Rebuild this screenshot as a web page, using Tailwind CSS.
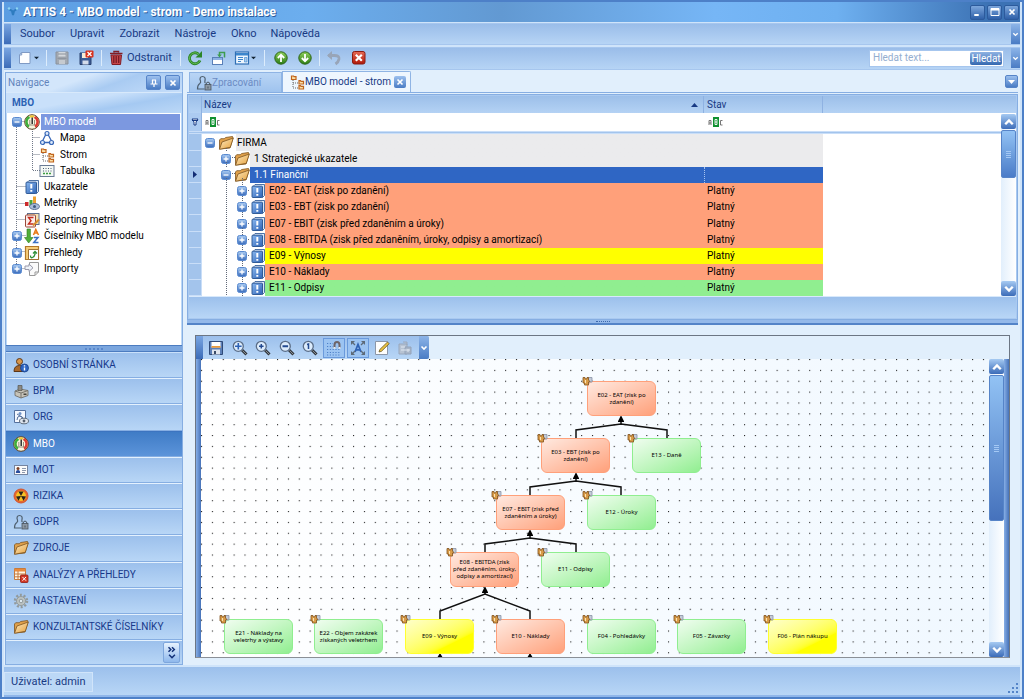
<!DOCTYPE html>
<html lang="cs">
<head>
<meta charset="utf-8">
<title>ATTIS 4 - MBO model - strom - Demo instalace</title>
<script src="https://cdn.jsdelivr.net/npm/@tailwindcss/browser@4"></script>
</head>
<body class="flex h-screen flex-col overflow-hidden border-2 border-[#4d80c8] bg-[#cfe4fa] px-[2px] font-[Roboto,sans-serif] text-[10px] leading-4 text-black">

<svg width="0" height="0" class="absolute" aria-hidden="true">
  <defs>
    <linearGradient id="gBlue" x1="0" y1="0" x2="0" y2="1"><stop offset="0" stop-color="#a9cbf2"/><stop offset="1" stop-color="#3a6cbc"/></linearGradient>
    <linearGradient id="gBook" x1="0" y1="0" x2="1" y2="1"><stop offset="0" stop-color="#8ab8f0"/><stop offset="1" stop-color="#2e62b4"/></linearGradient>
    <linearGradient id="gFold" x1="0" y1="0" x2="1" y2="1"><stop offset="0" stop-color="#fdebc4"/><stop offset="1" stop-color="#e6a03a"/></linearGradient>
    <linearGradient id="gGreen" x1="0" y1="0" x2="0" y2="1"><stop offset="0" stop-color="#8fd05c"/><stop offset="1" stop-color="#2b7d14"/></linearGradient>
    <linearGradient id="gRed" x1="0" y1="0" x2="0" y2="1"><stop offset="0" stop-color="#e66a55"/><stop offset="1" stop-color="#b01808"/></linearGradient>
    <symbol id="plus" viewBox="0 0 10 10"><rect x=".5" y=".5" width="9" height="9" rx="2" fill="url(#gBlue)" stroke="#5a8ad0"/><path d="M5 2.500v5M2.500 5h5" stroke="#fff" stroke-width="1.300"/></symbol>
    <symbol id="minus" viewBox="0 0 10 10"><rect x=".5" y=".5" width="9" height="9" rx="2" fill="url(#gBlue)" stroke="#5a8ad0"/><path d="M2.500 5h5" stroke="#fff" stroke-width="1.300"/></symbol>
    <symbol id="folder" viewBox="0 0 16 16"><path d="M1.500 14V5l1.200-1.300h3.500l1.500-1.200 6.800-1 .5 1.500L12 13z" fill="#e0a04a" stroke="#7d5420" stroke-width=".8"/><path d="M1.500 14.300 4 7 15.300 3 12.300 12.300z" fill="url(#gFold)" stroke="#7d5420" stroke-width=".8"/></symbol>
    <symbol id="book" viewBox="0 0 16 16"><path d="M3 3.500 5 1.500h9.500v11l-2 2z" fill="#dbe8f8" stroke="#24508f" stroke-width=".8"/><rect x="2" y="3.200" width="10.500" height="11.300" rx=".8" fill="url(#gBook)" stroke="#24508f" stroke-width=".9"/><path d="M7.300 5v4.500M7.300 11v1.700" stroke="#fff" stroke-width="2"/></symbol>
    <symbol id="gauge" viewBox="0 0 16 16"><circle cx="8" cy="8" r="7.300" fill="#f8f5de" stroke="#5f4426" stroke-width="1"/><path d="M5.500 3A5.500 5.500 0 0 0 5 12.600" fill="none" stroke="#3fae3c" stroke-width="2.500"/><path d="M10.500 3A5.500 5.500 0 0 1 11 12.600" fill="none" stroke="#dd3c32" stroke-width="2.500"/><path d="M6 2.700a6 6 0 0 1 4 0" fill="none" stroke="#f5c832" stroke-width="2"/><path d="M7.500 3.500h1.400V10H7.500z" fill="#222"/><path d="M5.800 6v5h4.700V6" fill="none" stroke="#8b8674" stroke-width=".9"/></symbol>
    <symbol id="mapa" viewBox="0 0 16 16"><path d="M7 4 3.500 11M8.800 4l3.700 7M5 12.500h6" stroke="#3a69b8" stroke-width="1.300"/><circle cx="8" cy="3.500" r="2" fill="#dce9fb" stroke="#3a69b8" stroke-width="1.200"/><circle cx="3.500" cy="12.500" r="2" fill="#dce9fb" stroke="#3a69b8" stroke-width="1.200"/><circle cx="12.500" cy="12.500" r="2" fill="#dce9fb" stroke="#3a69b8" stroke-width="1.200"/></symbol>
    <symbol id="strom" viewBox="0 0 16 16"><path d="M4 6v8h5M4 9h5" fill="none" stroke="#666" stroke-dasharray="1 1"/><path d="M2.500 2h2l.5.700h2V5.500H2.500zM10 6.700h1.500l.5.600h2.500V10H10zM10 11.700h1.500l.5.600h2.500V15H10z" fill="#fbe0a8" stroke="#c0641c" stroke-width="1.200"/></symbol>
    <symbol id="tabulka" viewBox="0 0 16 16"><rect x="1" y="2.500" width="14" height="11" fill="#f4f8f4" stroke="#687a94"/><path d="M4 5.500h9M4 8h9" stroke="#4c5f78" stroke-dasharray="1 1.500"/><path d="M4 10.500h9" stroke="#3c9c42" stroke-width="1.500" stroke-dasharray="2 1"/></symbol>
    <symbol id="metriky" viewBox="0 0 16 16"><path d="M1 7h3.500v4H1z" fill="#cc2a2a"/><path d="M5.500 5h3v7h-3z" fill="#48a83c"/><path d="M9 1.500h3V10H9z" fill="#eda030"/><ellipse cx="10.500" cy="11.500" rx="5" ry="3" fill="#a9bcd8" stroke="#5b6f92"/><circle cx="10.500" cy="11.500" r="1.500" fill="#405880"/></symbol>
    <symbol id="sigma" viewBox="0 0 16 16"><rect x="3.500" y="1.500" width="11.500" height="11" fill="#f8e2b0" stroke="#5f6f90"/><rect x="1.500" y="3" width="10" height="12" rx="1" fill="#fbeeea" stroke="#9a4838"/><path d="M9.500 5.500h-5L7 8.800 4.500 12h5" fill="none" stroke="#c42a1c" stroke-width="1.400"/><path d="m9 13.500 6-6" stroke="#d89030" stroke-width="2"/></symbol>
    <symbol id="sortaz" viewBox="0 0 16 16"><path d="M3 1h3.400v8.500H9L4.700 15 .5 9.500H3z" fill="#52ae3a" stroke="#2f7a20" stroke-width=".6"/><path d="M9.500 7 11.800 1.500 14.500 7M10.500 5h3" fill="none" stroke="#e87818" stroke-width="1.500"/><path d="M9.800 9.500h4.200L9.800 14.500h4.700" fill="none" stroke="#3a70c4" stroke-width="1.500"/></symbol>
    <symbol id="prehledy" viewBox="0 0 16 16"><path d="M1.500 1.500h13v13h-13z" fill="#f6cc78" stroke="#b27828" stroke-width="1.200"/><path d="M4.500 4.500h10v10h-10z" fill="#fff" stroke="#a07030"/><path d="M6.500 10.500q0 3 2 2T11 9V6.500m-2 2 2-2 2 2" fill="none" stroke="#2f9038" stroke-width="1.300"/></symbol>
    <symbol id="importy" viewBox="0 0 16 16"><path d="M5.500 1.500h9V11L11 14.500H5.500z" fill="#fafafa" stroke="#999"/><path d="M14.500 11H11v3.500" fill="none" stroke="#999"/><path d="M1 5h4V3l4 3.800L5 10.500V8.500H1z" fill="#eef2f8" stroke="#99a"/></symbol>
    <symbol id="osobni" viewBox="0 0 16 16"><circle cx="6.500" cy="4.500" r="3" fill="#d8964a" stroke="#5d3717"/><path d="M1 14.500q0-6 5.500-6t5 6z" fill="#a8682c" stroke="#5d3717"/><circle cx="11.500" cy="11" r="4" fill="#2e66c4" stroke="#173f88" stroke-width=".8"/><path d="M11.500 8.300v1.200m0 1v3" stroke="#fff" stroke-width="1.400"/></symbol>
    <symbol id="bpm" viewBox="0 0 16 16"><path d="m2 8 5-2 8 1.500v5L8 15l-6-2.500z" fill="#c6c3b9" stroke="#68655c" stroke-width=".8"/><path d="M2 8l6 2 7-2.500M8 10v5" fill="none" stroke="#78756c"/><path d="M5 2.500h4v5H5z" fill="#8c8a84" stroke="#55534e" stroke-width=".7"/><path d="M10.500 10.500h3v1.500h-3z" fill="#44423c"/></symbol>
    <symbol id="org" viewBox="0 0 16 16"><path d="M1.500 1.500h11v12h-11z" fill="#f4f8ff" stroke="#55719e"/><circle cx="7" cy="4.500" r="1.500" fill="#6f93c8"/><path d="M4 11q0-4 3-4t3 4M4 5l6 4" fill="none" stroke="#55719e"/><ellipse cx="11" cy="12" rx="4.500" ry="2.800" fill="#dfe6ee" stroke="#63707f"/><circle cx="11" cy="12" r="1.400" fill="#56606e"/></symbol>
    <symbol id="mot" viewBox="0 0 16 16"><rect x="1.500" y="3.500" width="13" height="9" fill="#fbfbfb" stroke="#7584a0"/><circle cx="5" cy="6.500" r="1.500" fill="#7b3e22"/><path d="M2.800 11q0-3 2.200-3t2.200 3z" fill="#294c9c"/><path d="M9 6.500h4M9 8.500h4M9 10.500h3" stroke="#8d98ac"/></symbol>
    <symbol id="rizika" viewBox="0 0 16 16"><circle cx="8" cy="8" r="7" fill="#e8682c" stroke="#cf5530"/><circle cx="8" cy="8" r="5" fill="#f6c224"/><path d="M8 8 5.500 3.500h5zM8 8l5 .500-2.500 4.200zM8 8l-5 .500 2.500 4.200z" fill="#28221a"/></symbol>
    <symbol id="gdpr" viewBox="0 0 16 16"><path d="M6.500 1.500c2.500 0 3 2 2.500 4-.300 1.500-.600 2 .5 2.500M6.500 1.500C4 1.500 3.500 4 4.500 6c.700 1.500 0 2-1 2.800C2 9.800 1.500 11 1.500 14h7" fill="none" stroke="#4f6070" stroke-width="1.200"/><rect x="9" y="9.500" width="6" height="5.500" fill="#8c98a4" stroke="#49545f" stroke-width=".8"/><path d="M10.300 9.500V8q1.700-2 3.400 0v1.500M12 11.500v2" fill="none" stroke="#49545f"/></symbol>
    <symbol id="analyzy" viewBox="0 0 16 16"><path d="M1.500 1.500h11v11h-11z" fill="#fff6e4" stroke="#c67a3c"/><path d="M1.500 2h11v2.500h-11z" fill="#e88a3c"/><path d="M1.500 7h11M1.500 9.800h11M5 4v9" stroke="#c67a3c"/><rect x="7.500" y="8" width="7.500" height="7.500" rx="1" fill="#d33a28" stroke="#8f1a10" stroke-width=".8"/><path d="m9.500 10 3.500 3.700m0-3.700-3.500 3.700" stroke="#fff" stroke-width="1"/></symbol>
    <symbol id="gear" viewBox="0 0 16 16"><circle cx="8" cy="8" r="6" fill="none" stroke="#929a9c" stroke-width="2.500" stroke-dasharray="2 1.770"/><circle cx="8" cy="8" r="4.500" fill="#bcc3c2" stroke="#929a9c"/><circle cx="8" cy="8" r="1.800" fill="#dce8f0" stroke="#929a9c"/></symbol>
    <symbol id="newdoc" viewBox="0 0 16 16"><path d="M4.500 2.500H13v11H2.500V5z" fill="#fdfeff" stroke="#7f9ac4"/><path d="M2.500 5h2.200V2.500" fill="none" stroke="#7f9ac4"/></symbol>
    <symbol id="savegray" viewBox="0 0 16 16"><path d="M2 2h12v12H2z" fill="#a3a9b1" stroke="#8b929c"/><path d="M4.500 2h7v4.500h-7z" fill="#d4d8dc"/><path d="M5 10h6v4H5z" fill="#c6cacf"/><path d="M4 4h8M3.500 8.300h9" stroke="#8b929c"/></symbol>
    <symbol id="saveclose" viewBox="0 0 16 16"><path d="M2 3h11v11.500H2z" fill="#3c5c96" stroke="#28406e"/><path d="M4 3h6v5H4z" fill="#f6ecd8"/><path d="M4.500 10.500h6v4h-6z" fill="#d4dcea"/><rect x="7.500" y=".5" width="8" height="7" rx="1" fill="#d8301c"/><path d="m9.500 2 4 4m0-4-4 4" stroke="#fff" stroke-width="1.300"/></symbol>
    <symbol id="save" viewBox="0 0 16 16"><path d="M1.500 1.500h13v13h-13z" fill="#5c80b8" stroke="#2f4a78"/><path d="M3.500 2h9v5.500h-9z" fill="#fff"/><path d="M3.500 6h9v1.700h-9z" fill="#e89a3c"/><path d="M4 9.500h8v5H4z" fill="#dfe5ee"/><path d="M6 11h2v3H6z" fill="#3a4c68"/></symbol>
    <symbol id="trash" viewBox="0 0 16 16"><path d="M3 5h10.500l-1 9.500H4z" fill="#c8464a" stroke="#801c24"/><path d="M2 3.500h12.500M6 2.500V1.500h4.500v1" fill="none" stroke="#801c24" stroke-width="1.500"/><path d="M5.800 6v7M8.200 6v7M10.700 6v7" stroke="#711820" stroke-width="1.200"/></symbol>
    <symbol id="refresh" viewBox="0 0 16 16"><path d="M13 10.500A5.500 5.500 0 1 1 11.500 4" fill="none" stroke="#2b8526" stroke-width="2.800"/><path d="M13 10.500A5.500 5.500 0 1 1 11.500 4" fill="none" stroke="#66bb55" stroke-width="1"/><path d="M15 1v6.500H8.500z" fill="#2b8526"/></symbol>
    <symbol id="winup" viewBox="0 0 16 16"><rect x="1.500" y="7.500" width="10" height="7" fill="#fff" stroke="#5a80b8"/><path d="M2 8h9v2H2z" fill="#8eb2e4"/><path d="M8.500 5.500V2.500h5v5" fill="none" stroke="#3e9c4e" stroke-width="1.500"/><path d="m6.200 4.500 2.300 3 2.300-3z" fill="#3e9c4e"/></symbol>
    <symbol id="form" viewBox="0 0 16 16"><rect x="1.500" y="2" width="13" height="12" fill="#eef6fe" stroke="#2f6fb4" stroke-width="1.200"/><path d="M2 3h12v2.500H2z" fill="#3c86cc"/><path d="M4 7.500h5M4 9.500h5M4 11.500h3" stroke="#3c86cc"/><path d="M10.500 7.500h2.500v4.500h-2.500z" fill="#a8ccf0" stroke="#3c86cc" stroke-width=".6"/></symbol>
    <symbol id="gup" viewBox="0 0 16 16"><circle cx="8" cy="8" r="6.200" fill="url(#gGreen)" stroke="#2c6418"/><path d="M8 12V5M4.800 8 8 4.700 11.200 8" fill="none" stroke="#fff" stroke-width="1.800"/></symbol>
    <symbol id="gdown" viewBox="0 0 16 16"><circle cx="8" cy="8" r="6.200" fill="url(#gGreen)" stroke="#2c6418"/><path d="M8 4v7M4.800 8 8 11.300 11.200 8" fill="none" stroke="#fff" stroke-width="1.800"/></symbol>
    <symbol id="undo" viewBox="0 0 16 16"><path d="M2 5.500h6.500q5 0 4.500 3.500-.5 3-3.500 5" fill="none" stroke="#98a5b8" stroke-width="2.800"/><path d="M6 1v9L1 5.500z" fill="#98a5b8"/></symbol>
    <symbol id="redx" viewBox="0 0 16 16"><rect x="1.500" y="1.500" width="12.500" height="12.500" rx="2" fill="url(#gRed)" stroke="#8a1a10"/><path d="m4.800 4.800 6 6m0-6-6 6" stroke="#fff" stroke-width="2.200"/></symbol>
    <symbol id="lens" viewBox="0 0 16 16"><path d="m10 10 4.500 4.500" stroke="#33383e" stroke-width="3"/><path d="m10.500 10.500 4 4" stroke="#888f96" stroke-width="1"/><circle cx="6.300" cy="6.300" r="5" fill="#dcecfc" stroke="#5b6e88" stroke-width="1.300"/></symbol>
    <symbol id="magnet" viewBox="0 0 16 16"><path d="M1 3.500h6M1 6.500h6M1 9.500h14M1 12.500h14M1 15h14" stroke="#4e80c8" stroke-dasharray="1.200 1.600"/><path d="M8.500 8V5q0-3 2.500-3t2.500 3v3" fill="none" stroke="#6e6468" stroke-width="2"/><path d="M7.500 7h2v1.800h-2zM12.500 7h2v1.800h-2z" fill="#e8ecf0"/></symbol>
    <symbol id="fit" viewBox="0 0 16 16"><path d="M5 12 8 4.500l3 7.500M6 9.800h4" fill="none" stroke="#2f62b4" stroke-width="1.800"/><path d="M1 1h4L1 5zM15 1h-4l4 4zM1 15h4l-4-4zM15 15h-4l4-4z" fill="#5d6a78"/><path d="m2 2 3 3m9-3-3 3M2 14l3-3m9 3-3-3" stroke="#5d6a78" stroke-width="1.300"/></symbol>
    <symbol id="edit" viewBox="0 0 16 16"><path d="M1.500 1.500h12v13h-12z" fill="#fefefe" stroke="#8c97a8"/><path d="m5 12 .8-2.500L13.500 2l1.700 1.700L7.500 11.300z" fill="#e8c040" stroke="#6a5a28" stroke-width=".8"/></symbol>
    <symbol id="layout" viewBox="0 0 16 16"><path d="M2 4h8v10H2zM6 2h4v3" fill="#b7c3d3" stroke="#98a7bc"/><path d="M8 7h6v7H8z" fill="#a9b6c8" stroke="#93a2b8"/><path d="M4 7h4M4 10h9M11 9v3" stroke="#dfe7f1"/></symbol>
    <symbol id="puzzle" viewBox="0 0 11 10"><path d="M5.500 1.500h4.500v4.500H6z" fill="#c4cbd8" stroke="#8992a6" stroke-width=".8"/><path d="M1 1.500h2v1.300h2V1.500h1.500V4L8 5.500 6.500 6v3h-4V7H1z" fill="#d99c48" stroke="#80501c" stroke-width=".8"/><path d="M3.500 4v3" stroke="#fbe2b4"/></symbol>
    <symbol id="chevd" viewBox="0 0 8 8"><path d="m1.500 2.500 2.500 2.500 2.500-2.500" fill="none" stroke="#fff" stroke-width="1.600"/></symbol>
    <symbol id="chevu" viewBox="0 0 8 8"><path d="M1.500 5.500 4 3l2.500 2.500" fill="none" stroke="#fff" stroke-width="1.600"/></symbol>
    <symbol id="cross" viewBox="0 0 8 8"><path d="m1.500 1.500 5 5m0-5-5 5" stroke="#fff" stroke-width="1.700"/></symbol>
    <symbol id="pin" viewBox="0 0 8 8"><path d="M.5 5h7M2.500 1v4M5.500 1v4M2 1h4M4 5v3" stroke="#fff" stroke-width="1.200"/></symbol>
    <symbol id="abc" viewBox="0 0 16 10"><path d="M5 0h6v10H5z" fill="#109030"/><path d="M1 8V3.500h2V8M1 6h2" fill="none" stroke="#666" stroke-width=".9"/><path d="M7 7.500V2.500h2v5zM7 5h2" fill="none" stroke="#fff" stroke-width=".9"/><path d="M14.500 3.500h-2V8h2" fill="none" stroke="#666" stroke-width=".9"/></symbol>
    <symbol id="caret" viewBox="0 0 6 4"><path d="M0 .5h6l-3 3z" fill="#123"/></symbol>
  </defs>
</svg>

<header class="flex h-5 shrink-0 items-center bg-[linear-gradient(90deg,#5b9de2_0%,#6caeee_30%,#6299d2_49%,#76b6f6_70%,#6eb0f0_82%,#3c72b4_97%)]">
  <svg class="mx-[3px] size-3" viewBox="0 0 12 12"><path d="M1 2.500 5 5l1 4 1-4 4-3" fill="none" stroke="#2e7cc0" stroke-width="2"/><circle cx="2" cy="2.500" r="1.300" fill="#8fd4f4"/><circle cx="10" cy="2.500" r="1.300" fill="#8fd4f4"/></svg>
  <h1 class="ml-px text-[12px] font-bold text-white [text-shadow:1px_1px_0_#2c5c9c]">ATTIS 4 - MBO model - strom - Demo instalace</h1>
  <div class="mr-px ml-auto flex gap-[2px]">
    <button aria-label="Minimalizovat" class="flex size-[15px] items-center justify-center rounded-[2px] border border-[#2c5a9c] bg-linear-to-b from-[#7ca6dc] to-[#2f60a8]"><svg class="size-3" viewBox="0 0 8 8"><path d="M1.500 6h3" stroke="#fff" stroke-width="1.300"/></svg></button>
    <button aria-label="Maximalizovat" class="flex size-[15px] items-center justify-center rounded-[2px] border border-[#2c5a9c] bg-linear-to-b from-[#7ca6dc] to-[#2f60a8]"><svg class="size-3" viewBox="0 0 12 12"><path d="M2 2.500h8v7H2z" fill="none" stroke="#fff"/><path d="M2 3.500h8" stroke="#fff" stroke-width="2"/></svg></button>
    <button aria-label="Zavřít" class="flex size-[15px] items-center justify-center rounded-[2px] border border-[#2c5a9c] bg-linear-to-b from-[#7ca6dc] to-[#2f60a8]"><svg class="size-2"><use href="#cross"/></svg></button>
  </div>
</header>

<nav class="mt-px flex h-[22px] shrink-0 items-center border-y border-y-[#a6c6ee] bg-linear-to-b from-[#9abde9] to-[#b6d4f5] text-[11px] text-[#183a84]">
  <span class="mr-[9px] h-full w-[7px] bg-linear-to-b from-[#7aa6e2] to-[#3c6cb8]"></span>
  <button class="mr-[15px]">Soubor</button><button class="mr-[15px]">Upravit</button><button class="mr-[15px]">Zobrazit</button><button class="mr-[15px]">Nástroje</button><button class="mr-[14px]">Okno</button><button>Nápověda</button>
  <button aria-label="Další nabídky" class="ml-auto flex h-full w-[9px] items-center justify-center bg-linear-to-b from-[#8cb4e8] to-[#4a7cc4]"><svg class="size-[7px]"><use href="#chevd"/></svg></button>
</nav>

<div role="toolbar" class="mt-[2px] flex h-[23px] shrink-0 items-center border-y border-y-[#a6c6ee] bg-linear-to-b from-[#9abde9] to-[#b6d4f5] pb-px text-[11px] text-[#183a84]">
  <span class="mr-[6px] h-full w-[7px] bg-linear-to-b from-[#7aa6e2] to-[#3c6cb8]"></span>
  <button aria-label="Nový" class="flex items-center gap-px"><svg class="size-4"><use href="#newdoc"/></svg><svg class="h-1 w-[5px]"><use href="#caret"/></svg></button>
  <span class="mx-[7px] h-4 w-px bg-[#dcecfc]"></span>
  <button aria-label="Uložit"><svg class="size-4"><use href="#savegray"/></svg></button>
  <button aria-label="Uložit a zavřít" class="ml-2"><svg class="size-4"><use href="#saveclose"/></svg></button>
  <span class="ml-[7px] mr-[6px] h-4 w-px bg-[#dcecfc]"></span>
  <button class="flex items-center gap-[3px]"><svg class="size-4"><use href="#trash"/></svg>Odstranit</button>
  <span class="ml-2 mr-[6px] h-4 w-px bg-[#dcecfc]"></span>
  <button aria-label="Obnovit"><svg class="size-4"><use href="#refresh"/></svg></button>
  <button aria-label="Otevřít v okně" class="ml-2"><svg class="size-4"><use href="#winup"/></svg></button>
  <button aria-label="Zobrazení" class="ml-[7px] flex items-center gap-px"><svg class="size-4"><use href="#form"/></svg><svg class="h-1 w-[5px]"><use href="#caret"/></svg></button>
  <span class="mx-2 h-4 w-px bg-[#dcecfc]"></span>
  <button aria-label="Nahoru"><svg class="size-4"><use href="#gup"/></svg></button>
  <button aria-label="Dolů" class="ml-2"><svg class="size-4"><use href="#gdown"/></svg></button>
  <span class="mx-[6px] h-4 w-px bg-[#dcecfc]"></span>
  <button aria-label="Zpět"><svg class="size-4"><use href="#undo"/></svg></button>
  <button aria-label="Zrušit" class="ml-[9px]"><svg class="size-4"><use href="#redx"/></svg></button>
  <form class="ml-auto mr-[7px] flex h-[17px] items-center border border-[#a6c6ee] bg-white pr-px">
    <input aria-label="Hledat text" placeholder="Hledat text..." class="w-[100px] bg-transparent pl-[3px] text-[10px] leading-[14px] outline-none placeholder:text-[#94aed0]">
    <button type="button" class="h-[13px] w-8 rounded-[2px] bg-linear-to-b from-[#8eb2e2] to-[#3468b0] text-[10px] leading-[13px] text-white">Hledat</button>
  </form>
  <button aria-label="Další tlačítka" class="flex h-full w-[9px] items-center justify-center bg-linear-to-b from-[#8cb4e8] to-[#4a7cc4]"><svg class="size-[7px]"><use href="#chevd"/></svg></button>
</div>

<div class="flex min-h-0 flex-1 gap-[4px] bg-[#e1effc] pt-[2px] pr-[2px] pl-px">

  <aside class="flex w-[178px] shrink-0 flex-col border border-[#86aee2] bg-[#bcd8f6]">
    <div class="flex h-5 shrink-0 items-center gap-1 border-b border-[#d8e9fb] bg-[linear-gradient(160deg,#d3e6fb_40%,#a9cbf2_60%,#c6defa)] pr-[2px] pl-[2px] text-[#6284bc]">
      <span class="mr-auto">Navigace</span>
      <button aria-label="Připnout" class="flex size-[15px] items-center justify-center rounded-[2px] border border-[#5684c8] bg-linear-to-b from-[#9cc0ee] to-[#4a7cc4]"><svg class="size-2"><use href="#pin"/></svg></button>
      <button aria-label="Zavřít panel" class="flex size-[15px] items-center justify-center rounded-[2px] border border-[#5684c8] bg-linear-to-b from-[#9cc0ee] to-[#4a7cc4]"><svg class="size-2"><use href="#cross"/></svg></button>
    </div>
    <h2 class="h-5 shrink-0 bg-[linear-gradient(170deg,#c9e0fa_40%,#a5c9f2_65%,#bcd8f7)] pl-[6px] text-[10px] leading-5 font-bold text-[#2c62b4]">MBO</h2>
    <div class="relative mx-px min-h-0 flex-1 bg-white">
      <svg class="absolute top-0 left-0 h-[165px] w-14 stroke-[#707888]" stroke-dasharray="1 1"><path d="M9.500 14v141M9.500 8.500h9M25.500 16v41.500h8M25.500 24.500h8M25.500 41.500h8M9.500 73.500h9M9.500 90.500h9M9.500 106.500h9M9.500 122.500h9M9.500 138.500h9M9.500 155.500h9" fill="none"/></svg>
      <ul class="relative flex flex-col">
        <li class="flex h-[17px] items-center pl-[5px]"><svg class="size-[10px]"><use href="#minus"/></svg><svg class="ml-[2px] size-4"><use href="#gauge"/></svg><a href="#" class="mr-px ml-px flex-1 bg-[#7c98e0] pl-[3px] text-white">MBO model</a></li>
        <li class="flex h-4 items-center pl-8"><svg class="size-4"><use href="#mapa"/></svg><a href="#" class="ml-[5px]">Mapa</a></li>
        <li class="flex h-[17px] items-center pl-8"><svg class="size-4"><use href="#strom"/></svg><a href="#" class="ml-[5px]">Strom</a></li>
        <li class="flex h-4 items-center pl-8"><svg class="size-4"><use href="#tabulka"/></svg><a href="#" class="ml-[5px]">Tabulka</a></li>
        <li class="flex h-4 items-center pl-[17px]"><svg class="size-4"><use href="#book"/></svg><a href="#" class="ml-[4px]">Ukazatele</a></li>
        <li class="flex h-4 items-center pl-[17px]"><svg class="size-4"><use href="#metriky"/></svg><a href="#" class="ml-[4px]">Metriky</a></li>
        <li class="flex h-[17px] items-center pl-[17px]"><svg class="size-4"><use href="#sigma"/></svg><a href="#" class="ml-[4px]">Reporting metrik</a></li>
        <li class="flex h-4 items-center pl-[5px]"><svg class="size-[10px]"><use href="#plus"/></svg><svg class="ml-[2px] size-4"><use href="#sortaz"/></svg><a href="#" class="ml-[4px]">Číselníky MBO modelu</a></li>
        <li class="flex h-[17px] items-center pl-[5px]"><svg class="size-[10px]"><use href="#plus"/></svg><svg class="ml-[2px] size-4"><use href="#prehledy"/></svg><a href="#" class="ml-[4px]">Přehledy</a></li>
        <li class="flex h-4 items-center pl-[5px]"><svg class="size-[10px]"><use href="#plus"/></svg><svg class="ml-[2px] size-4"><use href="#importy"/></svg><a href="#" class="ml-[4px]">Importy</a></li>
      </ul>
    </div>
    <div class="flex h-[7px] shrink-0 items-center justify-center border-y border-[#4c7cc0] bg-[#7ba6de]"><span class="w-[18px] border-t-2 border-dotted border-[#5a88cc]"></span></div>
    <nav class="flex h-[288px] shrink-0 flex-col text-[#17388a]">
      <button class="flex flex-1 items-center gap-[4px] border-t border-b border-t-[#c9e0fa] border-b-[#86aee2] bg-linear-to-b from-[#9cc0ec] to-[#b8d6f6] pl-[7px]"><svg class="size-4"><use href="#osobni"/></svg>OSOBNÍ STRÁNKA</button>
      <button class="flex flex-1 items-center gap-[4px] border-t border-b border-t-[#e4f1fe] border-b-[#86aee2] bg-linear-to-b from-[#9cc0ec] to-[#b8d6f6] pl-[7px]"><svg class="size-4"><use href="#bpm"/></svg>BPM</button>
      <button class="flex flex-1 items-center gap-[4px] border-t border-b border-t-[#e4f1fe] border-b-[#86aee2] bg-linear-to-b from-[#9cc0ec] to-[#b8d6f6] pl-[7px]"><svg class="size-4"><use href="#org"/></svg>ORG</button>
      <button class="flex flex-1 items-center gap-[4px] border-t border-b border-t-[#3c74c0] border-b-[#86aee2] bg-linear-to-b from-[#3f7cc6] to-[#5c94da] pl-[7px] text-white"><svg class="size-4"><use href="#gauge"/></svg>MBO</button>
      <button class="flex flex-1 items-center gap-[4px] border-t border-b border-t-[#e4f1fe] border-b-[#86aee2] bg-linear-to-b from-[#9cc0ec] to-[#b8d6f6] pl-[7px]"><svg class="size-4"><use href="#mot"/></svg>MOT</button>
      <button class="flex flex-1 items-center gap-[4px] border-t border-b border-t-[#e4f1fe] border-b-[#86aee2] bg-linear-to-b from-[#9cc0ec] to-[#b8d6f6] pl-[7px]"><svg class="size-4"><use href="#rizika"/></svg>RIZIKA</button>
      <button class="flex flex-1 items-center gap-[4px] border-t border-b border-t-[#e4f1fe] border-b-[#86aee2] bg-linear-to-b from-[#9cc0ec] to-[#b8d6f6] pl-[7px]"><svg class="size-4"><use href="#gdpr"/></svg>GDPR</button>
      <button class="flex flex-1 items-center gap-[4px] border-t border-b border-t-[#e4f1fe] border-b-[#86aee2] bg-linear-to-b from-[#9cc0ec] to-[#b8d6f6] pl-[7px]"><svg class="size-4"><use href="#folder"/></svg>ZDROJE</button>
      <button class="flex flex-1 items-center gap-[4px] border-t border-b border-t-[#e4f1fe] border-b-[#86aee2] bg-linear-to-b from-[#9cc0ec] to-[#b8d6f6] pl-[7px]"><svg class="size-4"><use href="#analyzy"/></svg>ANALÝZY A PŘEHLEDY</button>
      <button class="flex flex-1 items-center gap-[4px] border-t border-b border-t-[#e4f1fe] border-b-[#86aee2] bg-linear-to-b from-[#9cc0ec] to-[#b8d6f6] pl-[7px]"><svg class="size-4"><use href="#gear"/></svg>NASTAVENÍ</button>
      <button class="flex flex-1 items-center gap-[4px] border-t border-b border-t-[#e4f1fe] border-b-[#86aee2] bg-linear-to-b from-[#9cc0ec] to-[#b8d6f6] pl-[7px]"><svg class="size-4"><use href="#folder"/></svg>KONZULTANTSKÉ ČÍSELNÍKY</button>
    </nav>
    <div class="flex h-6 shrink-0 items-center justify-end border-t border-[#e4f1fe] bg-linear-to-b from-[#9cc0ec] to-[#b8d6f6] pr-[2px]">
      <button aria-label="Další skupiny" class="flex h-[21px] w-[17px] items-center justify-center rounded-[2px] border border-[#7ea6dc] bg-linear-to-b from-[#e6f2fe] to-[#8fb8ec]"><svg class="h-[14px] w-[10px]" viewBox="0 0 8 12"><path d="m1 1 2 2-2 2m3-4 2 2-2 2M1.500 7.500 4 10l2.500-2.500" fill="none" stroke="#123078" stroke-width="1.300"/></svg></button>
    </div>
  </aside>

  <main class="flex min-w-0 flex-1 flex-col">
    <div role="tablist" class="flex h-[21px] shrink-0 items-end border-b border-[#86aee2] pl-[2px]">
      <button role="tab" class="flex h-5 w-[93px] items-center border border-b-0 border-[#8fb4e4] bg-linear-to-b from-[#b9d5f5] to-[#9fc3ee] pl-[6px] text-[#6c8cc4]"><svg class="size-4"><use href="#gdpr"/></svg>Zpracování</button>
      <div class="flex h-[21px] w-[129px] items-center rounded-tr-[2px] border border-b-0 border-[#8fb4e4] bg-[#eef6fe] pl-[6px]">
        <button role="tab" aria-selected="true" class="flex items-center text-[#183a84]"><svg class="size-4"><use href="#strom"/></svg>MBO model - strom</button>
        <button aria-label="Zavřít kartu" class="mr-1 ml-auto flex size-3 items-center justify-center rounded-[2px] bg-linear-to-b from-[#9cc0ee] to-[#4a7cc4]"><svg class="size-2"><use href="#cross"/></svg></button>
      </div>
      <button aria-label="Seznam karet" class="mb-[4px] ml-auto flex size-[13px] items-center justify-center rounded-[2px] border border-[#5684c8] bg-linear-to-b from-[#9cc0ee] to-[#4a7cc4]"><svg class="h-1 w-[7px]" viewBox="0 0 7 4"><path d="M0 0h7L3.500 4z" fill="#fff"/></svg></button>
    </div>

    <section class="mt-px flex shrink-0 flex-col border border-[#86aee2] bg-[#a9c9f0] p-px">
      <div class="relative bg-white">
        <table class="w-full table-fixed border-separate border-spacing-0 text-left">
          <colgroup><col class="w-[13px]"><col class="w-[502px]"><col class="w-[119px]"><col></colgroup>
          <thead class="text-[#183a84]">
            <tr class="h-[17px] bg-linear-to-b from-[#9cbfe9] to-[#b4d2f4]">
              <th class="border-r border-[#8fb2e2] p-0"></th>
              <th class="border-r border-[#8fb2e2] p-0 font-normal"><div class="flex items-center justify-between pr-[5px] pl-[2px]">Název<svg class="h-1 w-[7px]" viewBox="0 0 7 4"><path d="M0 4h7L3.500 0z" fill="#183a84"/></svg></div></th>
              <th class="border-r border-[#8fb2e2] p-0 pl-[3px] font-normal">Stav</th>
              <th class="p-0"></th>
            </tr>
            <tr class="h-[18px]">
              <td class="border-r border-[#8fb2e2] bg-[#accbf1] p-0"><svg class="ml-[2px] size-2" viewBox="0 0 8 8"><path d="M1 1h6L5 4v3H3V4zM1 2.500h6" fill="#fff" stroke="#183a84"/></svg></td>
              <td class="p-0 pl-[3px]"><svg class="h-[10px] w-4"><use href="#abc"/></svg></td>
              <td class="p-0 pl-[4px]"><svg class="h-[10px] w-4"><use href="#abc"/></svg></td>
              <td class="p-0"></td>
            </tr>
            <tr class="h-[3px] bg-[#a3c4ec]"><td colspan="4" class="border-y border-[#c9def8] p-0"></td></tr>
          </thead>
          <tbody>
            <tr class="h-[17px]"><td class="border-r border-b border-[#c9def8] bg-[#a3c4ec] p-0"></td><td class="bg-linear-to-r from-white from-[34px] to-[#ebebed] to-[34px] p-0"><div class="flex h-4 items-center pl-[3px]"><svg class="size-[10px]"><use href="#minus"/></svg><svg class="ml-[3px] size-4"><use href="#folder"/></svg><span class="ml-[3px]">FIRMA</span></div></td><td class="bg-[#ebebed] p-0"></td><td></td></tr>
            <tr class="h-4"><td class="border-r border-b border-[#c9def8] bg-[#a3c4ec] p-0"></td><td class="bg-linear-to-r from-white from-[48px] to-[#ebebed] to-[48px] p-0"><div class="flex h-4 items-center pl-[19px]"><svg class="size-[10px]"><use href="#plus"/></svg><svg class="ml-[3px] size-4"><use href="#folder"/></svg><span class="ml-[4px]">1 Strategické ukazatele</span></div></td><td class="bg-[#ebebed] p-0"></td><td></td></tr>
            <tr class="h-4"><td class="border-r border-b border-[#c9def8] bg-[#a3c4ec] p-0"><svg class="ml-[4px] h-[7px] w-1" viewBox="0 0 4 7"><path d="M0 0v7l4-3.500z" fill="#122c74"/></svg></td><td class="bg-linear-to-r from-white from-[48px] to-[#2f66c4] to-[48px] p-0 text-white"><div class="flex h-4 items-center pl-[19px]"><svg class="size-[10px]"><use href="#minus"/></svg><svg class="ml-[3px] size-4"><use href="#folder"/></svg><span class="ml-[4px]">1.1 Finanční</span></div></td><td class="border-l border-dotted border-l-[#a8c4f0] bg-[#2f66c4] p-0"></td><td></td></tr>
            <tr class="h-4"><td class="border-r border-b border-[#c9def8] bg-[#a3c4ec] p-0"></td><td class="bg-linear-to-r from-white from-[63px] to-[#ffa07a] to-[63px] p-0"><div class="flex h-4 items-center pl-[35px]"><svg class="size-[10px]"><use href="#plus"/></svg><svg class="ml-[3px] size-4"><use href="#book"/></svg><span class="ml-[3px]">E02 - EAT (zisk po zdanění)</span></div></td><td class="bg-[#ffa07a] p-0 pl-[3px]">Platný</td><td></td></tr>
            <tr class="h-4"><td class="border-r border-b border-[#c9def8] bg-[#a3c4ec] p-0"></td><td class="bg-linear-to-r from-white from-[63px] to-[#ffa07a] to-[63px] p-0"><div class="flex h-4 items-center pl-[35px]"><svg class="size-[10px]"><use href="#plus"/></svg><svg class="ml-[3px] size-4"><use href="#book"/></svg><span class="ml-[3px]">E03 - EBT (zisk po zdanění)</span></div></td><td class="bg-[#ffa07a] p-0 pl-[3px]">Platný</td><td></td></tr>
            <tr class="h-[17px]"><td class="border-r border-b border-[#c9def8] bg-[#a3c4ec] p-0"></td><td class="bg-linear-to-r from-white from-[63px] to-[#ffa07a] to-[63px] p-0"><div class="flex h-4 items-center pl-[35px]"><svg class="size-[10px]"><use href="#plus"/></svg><svg class="ml-[3px] size-4"><use href="#book"/></svg><span class="ml-[3px]">E07 - EBIT (zisk před zdaněním a úroky)</span></div></td><td class="bg-[#ffa07a] p-0 pl-[3px]">Platný</td><td></td></tr>
            <tr class="h-4"><td class="border-r border-b border-[#c9def8] bg-[#a3c4ec] p-0"></td><td class="bg-linear-to-r from-white from-[63px] to-[#ffa07a] to-[63px] p-0"><div class="flex h-4 items-center pl-[35px]"><svg class="size-[10px]"><use href="#plus"/></svg><svg class="ml-[3px] size-4"><use href="#book"/></svg><span class="ml-[3px]">E08 - EBITDA (zisk před zdaněním, úroky, odpisy a amortizací)</span></div></td><td class="bg-[#ffa07a] p-0 pl-[3px]">Platný</td><td></td></tr>
            <tr class="h-4"><td class="border-r border-b border-[#c9def8] bg-[#a3c4ec] p-0"></td><td class="bg-linear-to-r from-white from-[63px] to-[#ffff00] to-[63px] p-0"><div class="flex h-4 items-center pl-[35px]"><svg class="size-[10px]"><use href="#plus"/></svg><svg class="ml-[3px] size-4"><use href="#book"/></svg><span class="ml-[3px]">E09 - Výnosy</span></div></td><td class="bg-[#ffff00] p-0 pl-[3px]">Platný</td><td></td></tr>
            <tr class="h-4"><td class="border-r border-b border-[#c9def8] bg-[#a3c4ec] p-0"></td><td class="bg-linear-to-r from-white from-[63px] to-[#ffa07a] to-[63px] p-0"><div class="flex h-4 items-center pl-[35px]"><svg class="size-[10px]"><use href="#plus"/></svg><svg class="ml-[3px] size-4"><use href="#book"/></svg><span class="ml-[3px]">E10 - Náklady</span></div></td><td class="bg-[#ffa07a] p-0 pl-[3px]">Platný</td><td></td></tr>
            <tr class="h-4"><td class="border-r border-b border-[#c9def8] bg-[#a3c4ec] p-0"></td><td class="bg-linear-to-r from-white from-[63px] to-[#90ee90] to-[63px] p-0"><div class="flex h-4 items-center pl-[35px]"><svg class="size-[10px]"><use href="#plus"/></svg><svg class="ml-[3px] size-4"><use href="#book"/></svg><span class="ml-[3px]">E11 - Odpisy</span></div></td><td class="bg-[#90ee90] p-0 pl-[3px]">Platný</td><td></td></tr>
          </tbody>
        </table>
        <svg class="absolute bottom-0 left-[13px] h-[148px] w-[60px]" stroke="#606878" stroke-dasharray="1 1"><path d="M24.500 0v3M24.500 14v5M24.500 30v118M40.500 30v8M40.500 48v6M40.500 64v6M40.500 80v7M40.500 97v6M40.500 113v6M40.500 129v6M40.500 145v3M30 9.500h3M30 25.500h3M46 42.500h2M46 58.500h2M46 75.500h2M46 91.500h2M46 107.500h2M46 123.500h2M46 140.500h2"/></svg>
        <div class="absolute top-[18px] right-0 bottom-0 flex w-[15px] flex-col bg-linear-to-r from-[#e2effc] to-white">
          <button aria-label="Posunout nahoru" class="flex h-[15px] w-full items-center justify-center rounded-[2px] bg-linear-to-b from-[#a6caf2] to-[#3c6cb8]"><svg class="size-3"><use href="#chevu"/></svg></button>
          <div class="mt-px flex h-12 items-center justify-center rounded-[2px] border border-[#5684c8] bg-[linear-gradient(180deg,#92c2f4,#4a7cc8)]"><span class="h-[7px] w-[5px] bg-[repeating-linear-gradient(180deg,#a4c8f4_0_1px,transparent_1px_2px)]"></span></div>
          <button aria-label="Posunout dolů" class="mt-auto flex h-[15px] w-full items-center justify-center rounded-[2px] bg-linear-to-b from-[#a6caf2] to-[#3c6cb8]"><svg class="size-3"><use href="#chevd"/></svg></button>
        </div>
      </div>
      <div class="h-[22px] border-t border-[#d8e9fb] bg-linear-to-b from-[#9cc0ec] to-[#b8d6f6]"></div>
    </section>
    <div class="flex h-[5px] shrink-0 items-center justify-center border-b-2 border-[#5484c8] bg-[#94b9ea]"><span class="w-[14px] border-t border-dotted border-[#3c68ac]"></span></div>

    <section class="mx-2 mt-[10px] mb-[7px] flex min-h-0 flex-1 flex-col border border-[#6c7684] border-b-[#8a8f96] bg-[#e1effc]">
      <div role="toolbar" class="flex h-[23px] w-[233px] shrink-0 items-center overflow-hidden rounded-r-[2px] bg-linear-to-b from-[#9cc0ec] to-[#b8d6f6]">
        <span class="mr-[5px] h-full w-[7px] shrink-0 bg-linear-to-b from-[#7aa6e2] to-[#3c6cb8]"></span>
        <button aria-label="Uložit"><svg class="size-4"><use href="#save"/></svg></button>
        <button aria-label="Přizpůsobit" class="ml-2"><svg class="size-4" viewBox="0 0 16 16"><use href="#lens"/><path d="M6.300 3v6.600M3 6.300h6.600" stroke="#2f62b4" stroke-width="1.600"/></svg></button>
        <button aria-label="Přiblížit" class="ml-[7px]"><svg class="size-4" viewBox="0 0 16 16"><use href="#lens"/><path d="M6.300 4v4.600M4 6.300h4.600" stroke="#234a90" stroke-width="1.500"/></svg></button>
        <button aria-label="Oddálit" class="ml-2"><svg class="size-4" viewBox="0 0 16 16"><use href="#lens"/><path d="M3.500 6.300h5.600" stroke="#234a90" stroke-width="2"/></svg></button>
        <button aria-label="Skutečná velikost" class="ml-[7px]"><svg class="size-4" viewBox="0 0 16 16"><use href="#lens"/><path d="M5 4.500 6.500 4v5" fill="none" stroke="#234a90" stroke-width="1.500"/></svg></button>
        <button aria-label="Mřížka" aria-pressed="true" class="ml-[5px] flex h-5 w-[22px] shrink-0 items-center justify-center border border-[#6a9adc] bg-[#9cc4f2]"><svg class="size-4"><use href="#magnet"/></svg></button>
        <button aria-label="Rozložení" aria-pressed="true" class="ml-[2px] flex h-5 w-[22px] shrink-0 items-center justify-center border border-[#6a9adc] bg-[#9cc4f2]"><svg class="size-4"><use href="#fit"/></svg></button>
        <button aria-label="Upravit" class="ml-[5px]"><svg class="size-4"><use href="#edit"/></svg></button>
        <button aria-label="Uspořádat" class="ml-[7px]"><svg class="size-4"><use href="#layout"/></svg></button>
        <button aria-label="Další" class="ml-auto flex h-full w-[10px] shrink-0 items-center justify-center bg-linear-to-b from-[#8cb4e8] to-[#4a7cc4]"><svg class="size-2"><use href="#chevd"/></svg></button>
      </div>
      <div class="flex min-h-0 flex-1">
        <div class="w-[5px] shrink-0 bg-[linear-gradient(90deg,#86aee6,#4672b8)]"></div>
        <div class="relative min-w-0 flex-1 overflow-hidden bg-linear-to-r from-white to-[#f0f8ff] font-['Noto_Sans',sans-serif] text-[6px] leading-[7px]">
          <svg class="absolute inset-0 size-full" aria-hidden="true">
            <defs>
              <pattern id="dots" width="10.860" height="10.860" patternUnits="userSpaceOnUse"><rect width="1.100" height="1.100" fill="#222"/></pattern>
              <marker id="arr" viewBox="0 0 8 8" refX="6" refY="4" markerWidth="4.500" markerHeight="4.500" orient="auto"><path d="M0 0l8 4-8 4z"/></marker>
            </defs>
            <rect width="100%" height="100%" fill="url(#dots)"/>
            <g fill="none" stroke="#111" stroke-width="1.500">
              <path d="M375 79v-8l45-6 46 6v8"/><path d="M420 65v-7" marker-end="url(#arr)"/>
              <path d="M329 136v-8l46-6 45 6v8"/><path d="M375 122v-7" marker-end="url(#arr)"/>
              <path d="M284 193v-8l45-6 46 6v8"/><path d="M329 179v-7" marker-end="url(#arr)"/>
              <path d="M239 261v-9l45-17 45 17v9"/><path d="M284 235v-6" marker-end="url(#arr)"/>
            </g>
            <path d="m239 294 3 5h-6zM329 294l3 5h-6z"/>
          </svg>
          <div class="absolute top-[22px] left-[386px] flex h-[35px] w-[69px] items-center justify-center rounded-md border border-[#ffa07a] bg-linear-to-br from-[#ffe9e0] to-[#ffa07a] px-1 text-center">E02 - EAT (zisk po zdanění)</div>
          <div class="absolute top-[79px] left-[340px] flex h-[35px] w-[69px] items-center justify-center rounded-md border border-[#ffa07a] bg-linear-to-br from-[#ffe9e0] to-[#ffa07a] px-1 text-center">E03 - EBT (zisk po zdanění)</div>
          <div class="absolute top-[79px] left-[431px] flex h-[35px] w-[69px] items-center justify-center rounded-md border border-[#90ee90] bg-linear-to-br from-[#f0fdf0] to-[#90ee90] text-center">E13 - Daně</div>
          <div class="absolute top-[136px] left-[295px] flex h-[35px] w-[69px] items-center justify-center rounded-md border border-[#ffa07a] bg-linear-to-br from-[#ffe9e0] to-[#ffa07a] text-center">E07 - EBIT (zisk před<br>zdaněním a úroky)</div>
          <div class="absolute top-[136px] left-[386px] flex h-[35px] w-[69px] items-center justify-center rounded-md border border-[#90ee90] bg-linear-to-br from-[#f0fdf0] to-[#90ee90] text-center">E12 - Úroky</div>
          <div class="absolute top-[193px] left-[249px] flex h-[35px] w-[69px] items-center justify-center rounded-md border border-[#ffa07a] bg-linear-to-br from-[#ffe9e0] to-[#ffa07a] text-center">E08 - EBITDA (zisk<br>před zdaněním, úroky,<br>odpisy a amortizací)</div>
          <div class="absolute top-[193px] left-[340px] flex h-[35px] w-[69px] items-center justify-center rounded-md border border-[#90ee90] bg-linear-to-br from-[#f0fdf0] to-[#90ee90] text-center">E11 - Odpisy</div>
          <div class="absolute top-[260px] left-[23px] flex h-[35px] w-[69px] items-center justify-center rounded-md border border-[#90ee90] bg-linear-to-br from-[#f0fdf0] to-[#90ee90] text-center">E21 - Náklady na<br>veletrhy a výstavy</div>
          <div class="absolute top-[260px] left-[113px] flex h-[35px] w-[69px] items-center justify-center rounded-md border border-[#90ee90] bg-linear-to-br from-[#f0fdf0] to-[#90ee90] text-center">E22 - Objem zakázek<br>získaných veletrhem</div>
          <div class="absolute top-[260px] left-[204px] flex h-[35px] w-[69px] items-center justify-center rounded-md border border-[#ffff30] bg-linear-to-br from-[#ffffc8] to-[#ffff00] to-70% text-center">E09 - Výnosy</div>
          <div class="absolute top-[260px] left-[295px] flex h-[35px] w-[69px] items-center justify-center rounded-md border border-[#ffa07a] bg-linear-to-br from-[#ffe9e0] to-[#ffa07a] text-center">E10 - Náklady</div>
          <div class="absolute top-[260px] left-[386px] flex h-[35px] w-[69px] items-center justify-center rounded-md border border-[#90ee90] bg-linear-to-br from-[#f0fdf0] to-[#90ee90] text-center">F04 - Pohledávky</div>
          <div class="absolute top-[260px] left-[476px] flex h-[35px] w-[69px] items-center justify-center rounded-md border border-[#90ee90] bg-linear-to-br from-[#f0fdf0] to-[#90ee90] text-center">F05 - Závazky</div>
          <div class="absolute top-[260px] left-[567px] flex h-[35px] w-[69px] items-center justify-center rounded-md border border-[#ffff30] bg-linear-to-br from-[#ffffc8] to-[#ffff00] to-70% text-center">F06 - Plán nákupu</div>
          <svg class="absolute inset-0 size-full" aria-hidden="true">
            <use href="#puzzle" x="381" y="17" width="11" height="10"/><use href="#puzzle" x="336" y="74" width="11" height="10"/><use href="#puzzle" x="426" y="74" width="11" height="10"/><use href="#puzzle" x="290" y="131" width="11" height="10"/><use href="#puzzle" x="381" y="131" width="11" height="10"/><use href="#puzzle" x="245" y="188" width="11" height="10"/><use href="#puzzle" x="336" y="188" width="11" height="10"/><use href="#puzzle" x="18" y="255" width="11" height="10"/><use href="#puzzle" x="109" y="255" width="11" height="10"/><use href="#puzzle" x="199" y="255" width="11" height="10"/><use href="#puzzle" x="290" y="255" width="11" height="10"/><use href="#puzzle" x="381" y="255" width="11" height="10"/><use href="#puzzle" x="472" y="255" width="11" height="10"/><use href="#puzzle" x="562" y="255" width="11" height="10"/>
          </svg>
        </div>
        <div class="flex w-[15px] shrink-0 flex-col bg-linear-to-r from-[#e2effc] to-white">
          <button aria-label="Posunout diagram nahoru" class="flex h-[15px] items-center justify-center rounded-[2px] bg-linear-to-b from-[#a6caf2] to-[#3c6cb8]"><svg class="size-3"><use href="#chevu"/></svg></button>
          <div class="mt-px flex h-[146px] items-center justify-center rounded-[2px] border border-[#5684c8] bg-linear-to-b from-[#92c2f4] to-[#4672bc]"><span class="h-[7px] w-[5px] bg-[repeating-linear-gradient(180deg,#a4c8f4_0_1px,transparent_1px_2px)]"></span></div>
          <button aria-label="Posunout diagram dolů" class="mt-auto flex h-[15px] items-center justify-center rounded-[2px] bg-linear-to-b from-[#a6caf2] to-[#3c6cb8]"><svg class="size-3"><use href="#chevd"/></svg></button>
        </div>
        <div class="w-[5px] shrink-0 bg-[linear-gradient(90deg,#86aee6,#4672b8)]"></div>
      </div>
    </section>
  </main>
</div>

<footer class="mt-[2px] flex h-[30px] shrink-0 items-center border-b-2 border-[#8fb6ea] bg-linear-to-b from-[#9cc0ec] to-[#b8d6f6] pt-[2px] text-[11px] text-[#183a84]">
  <div class="border border-[#d0e4fa] bg-[#bcd8f6] px-[6px] py-px">Uživatel: admin</div>
  <svg class="mt-auto mr-px mb-px ml-auto size-3" viewBox="0 0 12 12"><path d="M9 1h2v2H9zM5 5h2v2H5zM9 5h2v2H9zM1 9h2v2H1zM5 9h2v2H5zM9 9h2v2H9z" fill="#5484c8"/></svg>
</footer>
</body>
</html>
